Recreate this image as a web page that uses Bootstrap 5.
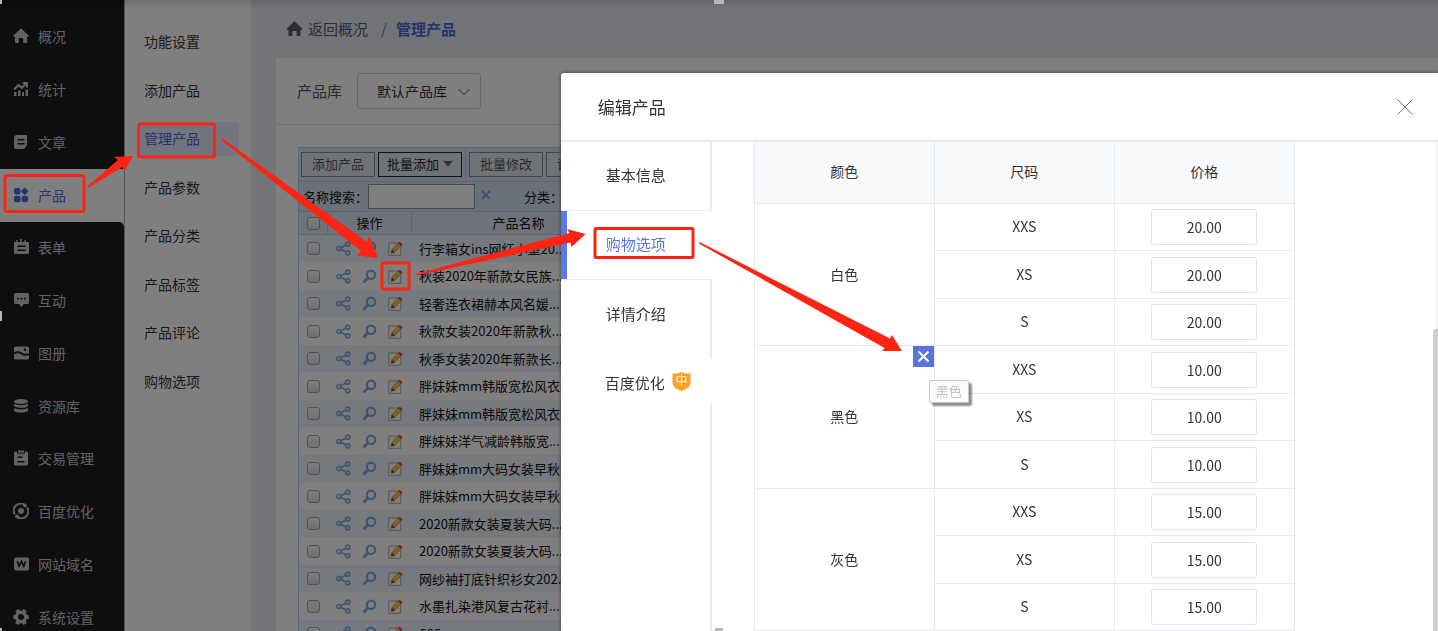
<!DOCTYPE html>
<html lang="zh-CN">
<head>
<meta charset="utf-8">
<meta name="viewport" content="width=device-width, initial-scale=1">
<title>管理产品</title>
<link rel="stylesheet" href="https://cdn.jsdelivr.net/npm/bootstrap@5.3.0/dist/css/bootstrap.min.css">
<style>
  :root { --brand: #5673e8; --line: #e6eaee; --grid: #b4cbec; }
  body { font-family: "Noto Sans CJK SC", sans-serif; font-size: 14px; line-height: 20px; color: #333; background: #e6e9f0; }
  a { text-decoration: none; color: inherit; }
  svg { display: block; flex: none; }

  /* primary menu */
  .rail { width: 125px; background: #fff; border-right: 1px solid #a8a8a8; }
  .rail-top { height: 11px; background: #1c1c1c; }
  .rail ul { height: calc(100vh + 2px); }
  .rail li { background: #1c1c1c; }
  .rail li a { padding: 0 0 2px 13px; gap: 9px; color: #c4c4ca; }
  .rail li.on { background: #fff; }
  .rail li.on a { color: #4d66d8; }
  .rail li.on + li { border-top-right-radius: 5px; }

  /* secondary menu */
  .subnav { width: 126px; background: #fff; padding-top: 25px; }
  .subnav ul { height: 388px; }
  .subnav a { margin: 0 12px 0 13px; padding: 6px 0 8px 6px; border-radius: 3px; }
  .subnav a.on { background: #e4eafa; color: #4d66d8; }

  .topshade { height: 8px; background: linear-gradient(rgba(0,0,0,.14), rgba(0,0,0,0)); }

  .workspace { padding-left: 25px; }
  .crumbs { height: 58px; font-size: 15px; padding-left: 10px; gap: 5px; color: #555b66; }
  .crumbs b { color: #4d66d8; }
  .lib { height: 67px; padding-left: 21px; gap: 15px; font-size: 15px; color: #555; border-bottom: 1px solid #e2e4e8; }
  .lib select { width: 124px; height: 36px; appearance: none; background: transparent; border: 1px solid #d0d0d4; border-radius: 3px; padding: 0 0 1px 19px; font-size: 14px; color: #333; }
  .lib .chev { top: 15px; right: 11px; }
  .gridbox { margin: 22px 0 0 22px; border: 1px solid var(--grid); border-right: 0; background: #d4e2f4; font-size: 13px; color: #111; }
  .tools { height: 33px; padding-left: 2px; gap: 3px; }
  .tools button { height: 25px; padding: 0 10px 2px; border: 1px solid #888; background: #dfe6ef; color: #555; font-size: 13px; line-height: 20px; white-space: nowrap; }
  .tools button.cur { border-color: #222; color: #222; padding: 0 8px 1px; }
  .tools .sep { width: 1px; align-self: stretch; background: var(--grid); }
  .finder { height: 30px; padding-left: 4px; border-top: 1px solid var(--grid); }
  .finder input { width: 107px; height: 25px; border: 1px solid #8e9299; background: #fff; }
  .finder .clr { border: 0; background: none; padding: 0 0 3px; margin: 0 33px 0 6px; }
  .goods { width: 100%; table-layout: fixed; border-collapse: separate; border-spacing: 0; background: #fff; }
  .goods th { height: 24px; padding: 0; font-weight: 400; text-align: center; background: #dce7f6; border-top: 1px solid var(--grid); border-bottom: 1px solid var(--grid); border-right: 1px solid var(--grid); }
  .goods td { padding: 0; }
  .goods tbody tr { height: 27px; }
  .goods tbody tr:nth-child(even) { height: 28px; }
  .goods tbody tr:nth-child(odd) td { background: #ecf2fa; }
  .goods .c1 { width: 29px; } .goods .c2 { width: 84px; } .goods .c3 { width: 214px; }
  .goods input { appearance: none; display: block; width: 13px; height: 13px; margin: 0 0 0 8px; border: 1px solid #a4a4a4; border-radius: 3px; background: linear-gradient(#fafafa, #e0e0e0); }
  .goods .acts { gap: 11px; padding-left: 8px; }
  .goods td.gname { padding-left: 7px; white-space: nowrap; overflow: hidden; }

  .dim { position: fixed; inset: 0; background: rgba(0,0,0,.5); }

  /* product editor */
  .editor { position: fixed; top: 73px; left: 39%; right: 0; bottom: 0; background: #fff; border-radius: 3px 0 0 0; box-shadow: 0 0 4px rgba(0,0,0,.5); overflow: hidden; }
  .editor header { height: 69px; flex: none; padding: 0 25px 0 37px; border-bottom: 2px solid #e9ebf1; }
  .editor h1 { font-size: 17px; line-height: 24px; font-weight: 400; margin: 0; }
  .editor .shut { border: 0; background: none; padding: 0; }
  .tabs { width: 151px; flex: none; font-size: 15px; }
  .tabs a, .tabs i { border-right: 2px solid #e9ebf1; padding: 0 0 2px 45px; }
  .tabs a { height: 68px; }
  .tabs a.on { height: 70px; border: solid #e9ebf1; border-width: 1px 0; color: var(--brand); box-shadow: inset 6px 0 0 #567be2; }
  .tabs a.tall { height: 79px; padding-bottom: 11px; }
  .tabs a.bare { height: 44px; padding: 4px 0 0 44px; border-color: transparent; gap: 7px; }
  .tabs a.bare svg { margin-bottom: 3px; }
  .tabs i { flex: 1; }
  .sheet { padding-left: 42px; overflow: hidden; }
  .prices { width: 541px; table-layout: fixed; border-collapse: separate; border-spacing: 0; border-left: 1px solid var(--line); text-align: center; }
  .prices th { height: 62px; padding: 0 0 3px; font-weight: 400; background: #f7f9fb; }
  .prices th, .prices td { border-right: 1px solid var(--line); border-bottom: 1px solid var(--line); }
  .prices td { height: 47px; padding: 0; position: relative; }
  .prices td:not(:last-child) { padding-bottom: 2px; }
  .prices tr:nth-child(even) td:not([rowspan]) { height: 48px; }
  .prices input { width: 106px; height: 36px; border: 1px solid #e2e4e9; border-radius: 2px; text-align: center; color: #333; background: #fff; }
  .drop { position: absolute; top: 0; right: 0; width: 21px; height: 21px; border: 0; padding: 4px; background: #5a74db; }
  .hint { position: absolute; z-index: 2; top: 34px; right: -35px; width: 40px; height: 23px; border: 1px solid #c9c9cc; border-radius: 2px; background: rgba(250,250,252,.85); box-shadow: 3px 3px 2px rgba(0,0,0,.45); color: #c2c2c6; font-size: 13px; line-height: 19px; text-align: center; }
  .bar { width: 5px; flex: none; padding-left: 3px; background: #fff; }
  .bar div { height: 187px; background: #f1f1f1; }
  .bar span { display: block; height: 100%; margin-left: -3px; border-radius: 3px 0 0 0; background: #cfcfcf; }
  .marks { position: absolute; top: 0; left: 0; pointer-events: none; }
</style>
</head>
<body class="vh-100 overflow-hidden">

<svg width="0" height="0" class="position-absolute" aria-hidden="true">
  <symbol id="home" viewBox="0 0 16 16"><path fill="currentColor" d="M8 .3 15.6 7.6c.5.5.3 1.1-.4 1.1H14v5.1c0 .7-.4 1.1-1 1.1h-2.800v-3.700c0-.7-.4-1.100-1-1.100H6.800c-.6 0-1 .4-1 1.100v3.700H3c-.6 0-1-.4-1-1.100V8.700H.8c-.7 0-.9-.6-.4-1.100z"/></symbol>
  <symbol id="share" viewBox="0 0 15 15"><g fill="none" stroke="#84ace0" stroke-width="1.700"><circle cx="3" cy="7.500" r="2"/><circle cx="11.700" cy="3.200" r="2"/><circle cx="11.700" cy="11.800" r="2"/><path d="M5 6.800 10 4M5 8.200l5 2.800"/></g></symbol>
  <symbol id="lens" viewBox="0 0 15 15"><circle cx="9" cy="5.800" r="4.200" fill="none" stroke="#7ea8e0" stroke-width="2.200"/><path d="m6 8.800-4.500 4.700" stroke="#7ea8e0" stroke-width="2.800"/></symbol>
  <symbol id="pen" viewBox="0 0 15 15"><path d="M.8 2h12v12.300H.8z" fill="#fff" stroke="#a8a8a8"/><path d="m4 8.500 6.500-6.700 2.700 2.700-6.500 6.800-3.500.9z" fill="#ffc93c" stroke="#a87c28" stroke-width=".7"/><path d="m10 2.300 1.700-1.600 2.900 2.500-1.600 1.700z" fill="#f0483c"/><path d="m4 8.400 3 3-3.800 1.100z" fill="#b04030"/></symbol>
</svg>

<div class="d-flex vh-100 overflow-hidden">
  <nav class="rail flex-shrink-0" aria-label="主菜单">
    <div class="rail-top"></div>
    <ul class="list-unstyled d-flex flex-column m-0">
      <li class="flex-fill d-flex"><a href="#" class="d-flex align-items-center w-100"><svg width="16" height="16"><use href="#home"/></svg>概况</a></li>
      <li class="flex-fill d-flex"><a href="#" class="d-flex align-items-center w-100"><svg width="16" height="16" viewBox="0 0 16 16"><path d="M1 8.500 5.500 4l3.200 3L13 2.500M9.800 2H14v4.500" fill="none" stroke="currentColor" stroke-width="2"/><path d="M1 11h2.500v4H1zM5 9.500h2.500V15H5zM9 11h2v4H9zM12.500 8.500H15V15h-2.500z" fill="currentColor"/></svg>统计</a></li>
      <li class="flex-fill d-flex"><a href="#" class="d-flex align-items-center w-100"><svg width="16" height="16" viewBox="0 0 16 16"><path fill="currentColor" fill-rule="evenodd" d="M4 1h10v10.500L11 15H3a2 2 0 0 1-2-2V4a3 3 0 0 1 3-3zm.5 4v1.600h7V5zm0 4v1.600h7V9z"/></svg>文章</a></li>
      <li class="flex-fill d-flex on"><a href="#" class="d-flex align-items-center w-100" aria-current="page"><svg width="16" height="16" viewBox="0 0 16 16" fill="currentColor"><rect x="1" y="1" width="6.500" height="6.500" rx="2"/><path d="m11.700 1.200 3.100 3.100-3.100 3.100-3.100-3.100z" stroke="currentColor" stroke-width="1.200" stroke-linejoin="round"/><rect x="1" y="8.700" width="6.500" height="6.500" rx="2"/><rect x="8.600" y="8.700" width="6.500" height="6.500" rx="2.500"/></svg>产品</a></li>
      <li class="flex-fill d-flex"><a href="#" class="d-flex align-items-center w-100"><svg width="16" height="16" viewBox="0 0 16 16"><path fill="currentColor" fill-rule="evenodd" d="M1 3h2V1h1.500v2h2.700V0h1.600v3h2.700V1H13v2h3v10.500a1.500 1.500 0 0 1-1.500 1.500h-12A1.500 1.500 0 0 1 1 13.500zm3.500 3.600v1.500h8V6.600zm0 4v1.500h8v-1.500z"/></svg>表单</a></li>
      <li class="flex-fill d-flex"><a href="#" class="d-flex align-items-center w-100"><svg width="16" height="16" viewBox="0 0 16 16"><path fill="currentColor" fill-rule="evenodd" d="M2.500 1h12A1.500 1.500 0 0 1 16 2.500v8a1.500 1.500 0 0 1-1.500 1.500H11l-2.500 3L6 12H2.500A1.500 1.500 0 0 1 1 10.500v-8A1.500 1.500 0 0 1 2.500 1zM4 5.700v1.800h1.800V5.700zm3.600 0v1.800h1.800V5.700zm3.600 0v1.800H13V5.700z"/></svg>互动</a></li>
      <li class="flex-fill d-flex"><a href="#" class="d-flex align-items-center w-100"><svg width="16" height="16" viewBox="0 0 16 16"><path fill="currentColor" fill-rule="evenodd" d="M2.500 1.500h12A1.500 1.500 0 0 1 16 3v5.500c-3.500-.5-4.200 1.200-6.500-.5C7 6 4 5.500 1 7.500V3a1.500 1.500 0 0 1 1.500-1.500zM12 3.400a1.300 1.300 0 1 0 0 2.600 1.300 1.300 0 0 0 0-2.600z"/><path fill="currentColor" d="M1 9.500c3-2 5.500-1.500 7.800.3 2.200 1.600 4.200.6 7.200.5V13a1.500 1.500 0 0 1-1.500 1.500h-12A1.500 1.500 0 0 1 1 13z"/></svg>图册</a></li>
      <li class="flex-fill d-flex"><a href="#" class="d-flex align-items-center w-100"><svg width="16" height="16" viewBox="0 0 16 16" fill="currentColor"><ellipse cx="8" cy="3.500" rx="7" ry="2.500"/><path d="M1 5.500c2 2.300 12 2.300 14 0v2c0 3-14 3-14 0zM1 9.700c2 2.300 12 2.300 14 0v2.500c0 3.200-14 3.200-14 0z"/></svg>资源库</a></li>
      <li class="flex-fill d-flex"><a href="#" class="d-flex align-items-center w-100"><svg width="16" height="16" viewBox="0 0 16 16"><path fill="currentColor" fill-rule="evenodd" d="M5 .5h6v2H5zM2.500 1.500H4v2h8v-2h1.500A1.500 1.500 0 0 1 15 3v11a1.500 1.500 0 0 1-1.500 1.500h-11A1.500 1.500 0 0 1 1 14V3a1.500 1.500 0 0 1 1.500-1.500zM4.500 6.500V8h5V6.500zm0 4.500v1.500h7V11z"/></svg>交易管理</a></li>
      <li class="flex-fill d-flex"><a href="#" class="d-flex align-items-center w-100"><svg width="16" height="16" viewBox="0 0 16 16"><circle cx="8" cy="8" r="3" fill="currentColor"/><path d="M1.800 11.500A7 7 0 0 1 12 2.200M14.200 4.500A7 7 0 0 1 4 13.800" fill="none" stroke="currentColor" stroke-width="2.200"/><circle cx="12" cy="2.600" r="1.900" fill="currentColor"/><circle cx="4" cy="13.400" r="1.900" fill="currentColor"/></svg>百度优化</a></li>
      <li class="flex-fill d-flex"><a href="#" class="d-flex align-items-center w-100"><svg width="16" height="16" viewBox="0 0 16 16"><rect x="1" y="1.500" width="15" height="13" rx="2" fill="currentColor"/><path d="m4.300 5.300 1.700 5 2.500-5 2.300 5 1.800-5" fill="none" stroke="#1c1c1c" stroke-width="1.600"/></svg>网站域名</a></li>
      <li class="flex-fill d-flex"><a href="#" class="d-flex align-items-center w-100"><svg width="16" height="16" viewBox="0 0 16 16"><circle cx="8" cy="8" r="4.700" fill="none" stroke="currentColor" stroke-width="3.400"/><path d="M13.200 8h2.600M.2 8h2.600M10.700 3.300l1.400-2.400M3.900 15.100l1.400-2.400M5.300 3.300 3.900.9M12.100 15.100l-1.400-2.400" stroke="currentColor" stroke-width="4"/></svg>系统设置</a></li>
    </ul>
  </nav>

  <nav class="subnav flex-shrink-0" aria-label="产品菜单">
    <ul class="list-unstyled d-flex flex-column m-0">
      <li class="flex-fill"><a class="d-block" href="#">功能设置</a></li>
      <li class="flex-fill"><a class="d-block" href="#">添加产品</a></li>
      <li class="flex-fill"><a class="d-block on" href="#">管理产品</a></li>
      <li class="flex-fill"><a class="d-block" href="#">产品参数</a></li>
      <li class="flex-fill"><a class="d-block" href="#">产品分类</a></li>
      <li class="flex-fill"><a class="d-block" href="#">产品标签</a></li>
      <li class="flex-fill"><a class="d-block" href="#">产品评论</a></li>
      <li class="flex-fill"><a class="d-block" href="#">购物选项</a></li>
    </ul>
  </nav>

  <main class="workspace flex-grow-1 overflow-hidden">
    <div class="crumbs d-flex align-items-center"><svg width="17" height="16"><use href="#home"/></svg><a href="#">返回概况</a><span class="ps-2 pe-1 text-secondary">/</span><b>管理产品</b></div>
    <div class="bg-white h-100">
      <div class="lib d-flex align-items-center">
        <label for="lib">产品库</label>
        <div class="position-relative lh-1">
          <select id="lib"><option>默认产品库</option></select>
          <svg class="chev position-absolute" width="12" height="8" viewBox="0 0 12 8"><path d="m.5 1 5.500 5.500L11.500 1" fill="none" stroke="#555"/></svg>
        </div>
      </div>
      <div class="gridbox">
        <div class="tools d-flex align-items-center">
          <button type="button">添加产品</button>
          <button type="button" class="cur d-flex align-items-center gap-1">批量添加<svg width="10" height="6" viewBox="0 0 10 6"><path d="M0 0h10L5 5.500z" fill="#666"/></svg></button>
          <span class="sep"></span>
          <button type="button">批量修改</button>
          <button type="button">设置分类</button>
        </div>
        <div class="finder d-flex align-items-center">
          <label for="kw">名称搜索：</label><input id="kw" type="text">
          <button class="clr" type="button" aria-label="清除"><svg width="10" height="10" viewBox="0 0 10 10"><path d="m1 1 8 8M9 1 1 9" stroke="#7ba6e0" stroke-width="2"/></svg></button>
          <span>分类：</span>
        </div>
        <table class="goods">
          <colgroup><col class="c1"><col class="c2"><col class="c3"><col></colgroup>
          <thead><tr><th><input type="checkbox" aria-label="全选"></th><th>操作</th><th>产品名称</th><th></th></tr></thead>
          <tbody id="goods"></tbody>
        </table>
      </div>
    </div>
  </main>
</div>
<div class="topshade position-absolute top-0 start-0 w-100"></div>
<div class="dim"></div>

<section class="editor d-flex flex-column" role="dialog" aria-labelledby="ttl">
  <header class="d-flex align-items-center justify-content-between">
    <h1 id="ttl">编辑产品</h1>
    <button class="shut" type="button" aria-label="关闭"><svg width="16" height="16" viewBox="0 0 16 16"><path d="m.5.5 15 15m0-15-15 15" stroke="#777"/></svg></button>
  </header>
  <div class="d-flex flex-grow-1 overflow-hidden">
    <nav class="tabs d-flex flex-column" aria-label="编辑分区">
      <a href="#" class="d-flex align-items-center">基本信息</a>
      <a href="#" class="d-flex align-items-center on">购物选项</a>
      <a href="#" class="d-flex align-items-center tall">详情介绍</a>
      <a href="#" class="d-flex align-items-center bare">百度优化<svg width="19" height="19" viewBox="0 0 19 19"><path d="M9.500 0c3 1.600 6 1.700 9 1.300V10c0 5-4 7.300-9 9-5-1.700-9-4-9-9V1.300c3 .4 6 .3 9-1.300z" fill="#ffa126"/><text x="9.500" y="13" font-size="12" fill="#fff" text-anchor="middle">中</text></svg></a>
      <i></i>
    </nav>
    <div class="sheet flex-grow-1">
      <table class="prices">
        <thead><tr><th>颜色</th><th>尺码</th><th>价格</th></tr></thead>
        <tbody id="prices"></tbody>
      </table>
    </div>
    <div class="bar" aria-hidden="true"><div></div><span></span></div>
  </div>
</section>

<svg class="marks" width="1438" height="631" aria-hidden="true">
  <g fill="none" stroke="#ff2314" stroke-width="3">
    <rect x="5" y="175.500" width="79" height="36" rx="2"/>
    <rect x="138.500" y="124" width="76" height="33" rx="2"/>
    <rect x="382" y="263" width="27" height="26" rx="1"/>
    <rect x="595" y="228.500" width="98" height="29" rx="1"/>
  </g>
  <g fill="#ff2314">
    <path d="M87 186.500 118 160l-4-3 19-1-8.500 15.500-2-4.500L88 188z"/>
    <path d="m221 140 1.500-1.500L367 242l2-6 9 22-21-2.500 4-4.500z"/>
    <path d="M416 275.500 415.500 274 569.500 233l-2.500-4 18.500 5-14 13-1-4.500z"/>
    <path d="m699 243.500.5-1.500L890 338.500l2-3.500 10 16h-20l2.500-3z"/>
  </g>
  <g fill="#b4b6bd"><path d="M0 0h2v4H0zM714 0h10v4h-10zM0 311h2v10H0zM0 628h2v3H0zM715 628h8v3h-8z"/></g>
</svg>

<script>
  const goods = ["行李箱女ins网红小型20...", "秋装2020年新款女民族...", "轻奢连衣裙赫本风名媛...", "秋款女装2020年新款秋...", "秋季女装2020年新款长...", "胖妹妹mm韩版宽松风衣...", "胖妹妹mm韩版宽松风衣...", "胖妹妹洋气减龄韩版宽...", "胖妹妹mm大码女装早秋...", "胖妹妹mm大码女装早秋...", "2020新款女装夏装大码...", "2020新款女装夏装大码...", "网纱袖打底针织衫女202...", "水墨扎染港风复古花衬...", "666"];
  const icon = (id, label) => `<a href="#" aria-label="${label}"><svg width="15" height="15"><use href="#${id}"/></svg></a>`;
  document.getElementById("goods").innerHTML = goods.map(n =>
    `<tr><td><input type="checkbox" aria-label="选择 ${n}"></td><td><div class="acts d-flex">${icon("share", "分享")}${icon("lens", "查看")}${icon("pen", "编辑")}</div></td><td class="gname">${n}</td><td></td></tr>`).join("");

  const colors = [["白色", "20.00"], ["黑色", "10.00"], ["灰色", "15.00"]];
  const tools = `<button class="drop" type="button" aria-label="删除黑色"><svg width="13" height="13" viewBox="0 0 13 13"><path d="m1.500 1.500 10 10m0-10-10 10" stroke="#fff" stroke-width="2"/></svg></button><span class="hint" role="tooltip">黑色</span>`;
  document.getElementById("prices").innerHTML = colors.map(([c, p]) =>
    ["XXS", "XS", "S"].map((s, i) =>
      `<tr>${i ? "" : `<td rowspan="3">${c}${c === "黑色" ? tools : ""}</td>`}<td>${s}</td><td><input type="text" value="${p}" aria-label="${c} ${s} 价格"></td></tr>`).join("")).join("");
</script>
<script src="https://cdn.jsdelivr.net/npm/bootstrap@5.3.0/dist/js/bootstrap.bundle.min.js"></script>
</body>
</html>
